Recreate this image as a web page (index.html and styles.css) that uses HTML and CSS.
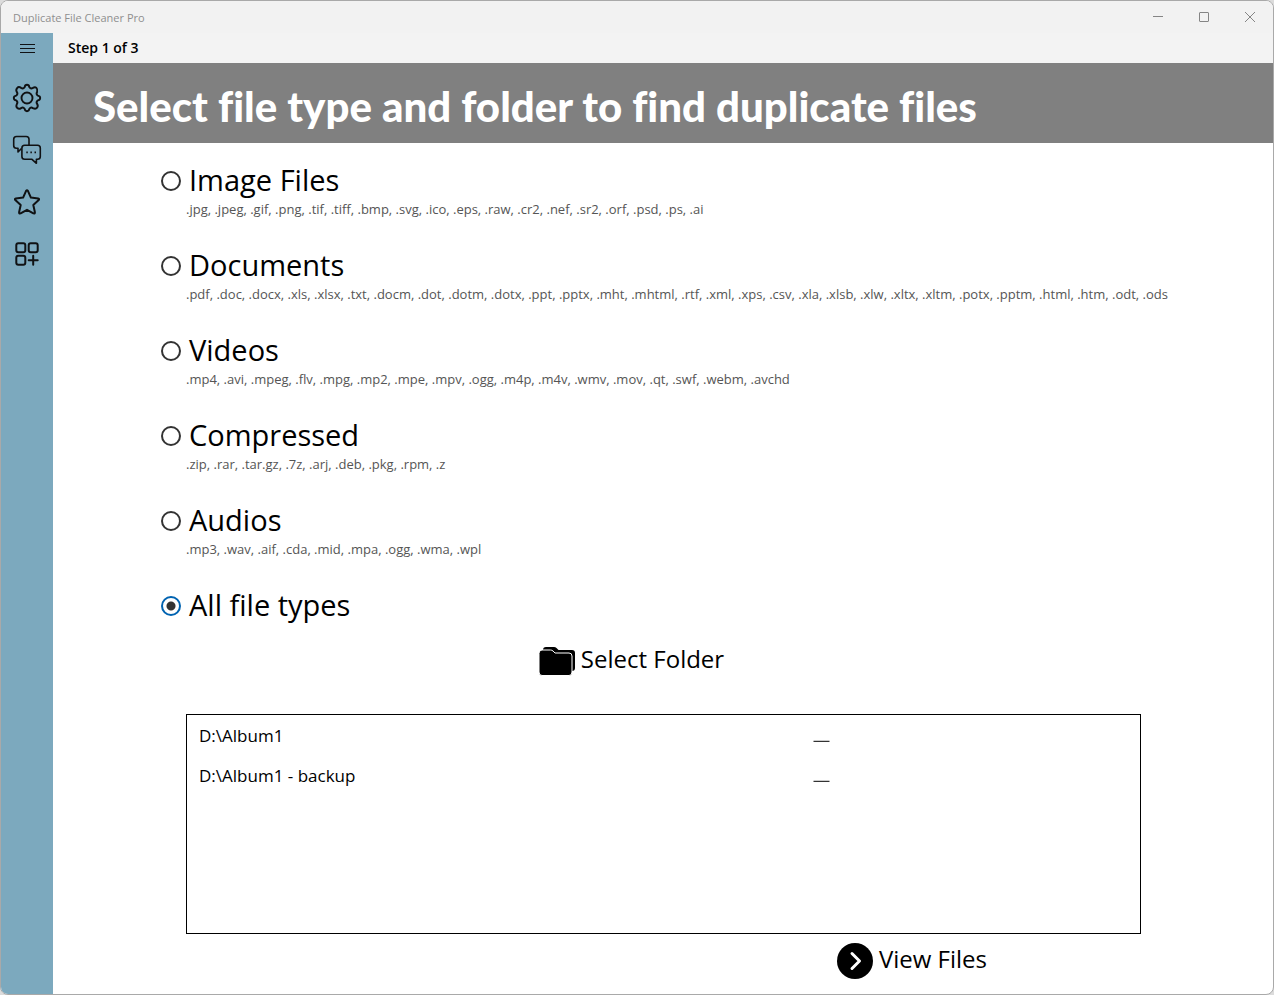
FILE: index.html
```html
<!DOCTYPE html>
<html lang="en">
<head>
    <meta charset="UTF-8">
    <meta name="viewport" content="width=device-width, initial-scale=1.0">
    <title>Duplicate File Cleaner Pro</title>
    <link rel="stylesheet" href="styles.css">
</head>
<body>
    <div class="window">
        <header class="titlebar">
            <span class="app-name">Duplicate File Cleaner Pro</span>
            <div class="window-controls">
                <button type="button" aria-label="Minimize">
                    <svg width="12" height="12" viewBox="0 0 12 12"><path d="M1 5.500H11"/></svg>
                </button>
                <button type="button" aria-label="Maximize">
                    <svg width="12" height="12" viewBox="0 0 12 12"><rect x="1.500" y="1.500" width="9" height="9" rx="0.500"/></svg>
                </button>
                <button type="button" aria-label="Close">
                    <svg width="12" height="12" viewBox="0 0 12 12"><path d="M1 1L11 11M11 1L1 11"/></svg>
                </button>
            </div>
        </header>

        <div class="layout">
            <nav class="sidebar">
                <button type="button" class="menu-btn" aria-label="Menu">
                    <svg width="16" height="12" viewBox="0 0 16 12" stroke-width="1"><path d="M1 1.500H16M1 5.500H16M1 9.500H16"/></svg>
                </button>
                <button type="button" aria-label="Settings">
                    <svg width="30" height="30" viewBox="0 0 30 30" stroke-width="1.900" stroke-linejoin="round">
                        <path d="M12.600 4.300Q13 1.800 15 1.800T17.400 4.300Q18.800 6.200 20.900 4.900Q23 3.500 24.400 4.900T25.100 9.100Q23.800 11.200 25.700 12.600Q28.200 13 28.200 15T25.700 17.400Q23.800 18.800 25.100 20.900Q26.500 23 25.100 24.700T20.900 25.100Q18.800 23.800 17.400 25.700Q17 28.200 15 28.200T12.600 25.700Q11.200 23.800 9.100 25.100Q7 26.500 5.300 25.100T4.900 20.900Q6.200 18.800 4.300 17.400Q1.800 17 1.800 15T4.300 12.600Q6.200 11.200 4.900 9.100Q3.500 7 5.100 5.100T9.100 4.900Q11.200 6.200 12.600 4.300Z"/>
                        <circle cx="15" cy="15" r="5.500"/>
                    </svg>
                </button>
                <button type="button" aria-label="Feedback">
                    <svg width="30" height="30" viewBox="0 0 30 30" stroke-width="1.600" stroke-linejoin="round">
                        <path d="M9.500 13.500L6 17V13.300H4.500Q1.700 13.300 1.700 10.500V4.300Q1.700 1.500 4.500 1.500H14.200Q17 1.500 17 4.300V10"/>
                        <path d="M12.700 10.300H25.500Q28.300 10.300 28.300 13.100V21.500Q28.300 24.300 25.500 24.300H24.400V28.300L20 24.300H12.700Q9.900 24.300 9.900 21.500V13.100Q9.900 10.300 12.700 10.300Z"/>
                        <path d="M14.300 17.300h1.500M18.400 17.300h1.500M22.500 17.300h1.500" stroke-width="1.800"/>
                    </svg>
                </button>
                <button type="button" aria-label="Rate">
                    <svg width="30" height="30" viewBox="0 0 30 30" stroke-width="2" stroke-linejoin="round">
                        <path d="M14.100 3.900Q15 2.600 15.900 3.900L18.900 10.600L26.200 11.400Q27.700 11.800 26.700 13.100L21.300 18L22.900 25.200Q23 26.900 21.400 26.400L15 22.800L8.600 26.400Q7 26.900 7.100 25.200L8.700 18L3.300 13.100Q2.300 11.800 3.800 11.400L11.100 10.600Z"/>
                    </svg>
                </button>
                <button type="button" aria-label="More apps">
                    <svg width="30" height="30" viewBox="0 0 30 30" stroke-width="2" stroke-linecap="round">
                        <rect x="4.300" y="4.300" width="9" height="9" rx="2"/>
                        <rect x="16.700" y="4.300" width="9" height="9" rx="2"/>
                        <rect x="4.300" y="16.700" width="9" height="9" rx="2"/>
                        <path d="M21.200 16.700V25.700M16.700 21.200H25.700"/>
                    </svg>
                </button>
            </nav>

            <main class="main">
                <div class="step">Step 1 of 3</div>
                <h1>Select file type and folder to find duplicate files</h1>

                <form class="content">
                    <div class="types">
                        <div class="type">
                            <input type="radio" name="type" id="images">
                            <label for="images">Image Files</label>
                            <p>.jpg, .jpeg, .gif, .png, .tif, .tiff, .bmp, .svg, .ico, .eps, .raw, .cr2, .nef, .sr2, .orf, .psd, .ps, .ai</p>
                        </div>
                        <div class="type">
                            <input type="radio" name="type" id="documents">
                            <label for="documents">Documents</label>
                            <p>.pdf, .doc, .docx, .xls, .xlsx, .txt, .docm, .dot, .dotm, .dotx, .ppt, .pptx, .mht, .mhtml, .rtf, .xml, .xps, .csv, .xla, .xlsb, .xlw, .xltx, .xltm, .potx, .pptm, .html, .htm, .odt, .ods</p>
                        </div>
                        <div class="type">
                            <input type="radio" name="type" id="videos">
                            <label for="videos">Videos</label>
                            <p>.mp4, .avi, .mpeg, .flv, .mpg, .mp2, .mpe, .mpv, .ogg, .m4p, .m4v, .wmv, .mov, .qt, .swf, .webm, .avchd</p>
                        </div>
                        <div class="type">
                            <input type="radio" name="type" id="compressed">
                            <label for="compressed">Compressed</label>
                            <p>.zip, .rar, .tar.gz, .7z, .arj, .deb, .pkg, .rpm, .z</p>
                        </div>
                        <div class="type">
                            <input type="radio" name="type" id="audios">
                            <label for="audios">Audios</label>
                            <p>.mp3, .wav, .aif, .cda, .mid, .mpa, .ogg, .wma, .wpl</p>
                        </div>
                        <div class="type">
                            <input type="radio" name="type" id="all" checked>
                            <label for="all">All file types</label>
                        </div>
                    </div>

                    <div class="select-row">
                        <button type="button" class="action">
                            <svg width="36" height="36" viewBox="0 0 36 36">
                                <path d="M4 7Q4 4 7 4H15Q16.500 4 17.500 5L19.500 7H33Q36 7 36 10V25Q36 28 33 28H7Q4 28 4 25Z"/>
                                <path d="M0 10.500Q0 7 3 7H11.500Q13 7 14 8L16 10H30Q33 10 33 13V29Q33 32.500 30 32.500H3Q0 32.500 0 29Z" stroke="#fff" stroke-width="1"/>
                            </svg>
                            <span>Select Folder</span>
                        </button>
                    </div>

                    <ul class="folders">
                        <li>
                            <span>D:\Album1</span>
                            <button type="button" aria-label="Remove D:\Album1"><svg width="17" height="16" viewBox="0 0 17 16"><path d="M0.500 14.300H16.500"/></svg></button>
                        </li>
                        <li>
                            <span>D:\Album1 - backup</span>
                            <button type="button" aria-label="Remove D:\Album1 - backup"><svg width="17" height="16" viewBox="0 0 17 16"><path d="M0.500 14.300H16.500"/></svg></button>
                        </li>
                    </ul>

                    <div class="view-row">
                        <button type="submit" class="action">
                            <svg width="36" height="36" viewBox="0 0 36 36">
                                <circle cx="18" cy="18" r="18"/>
                                <path d="M15 10.500L22.500 18L15 25.500" fill="none" stroke="#fff" stroke-width="3" stroke-linecap="round" stroke-linejoin="round"/>
                            </svg>
                            <span>View Files</span>
                        </button>
                    </div>
                </form>
            </main>
        </div>
    </div>
</body>
</html>
```
FILE: styles.css
```css
* {
    box-sizing: border-box;
}
body {
    margin: 0;
    background-color: #dcdcdc;
    font-family: "Open Sans", "Noto Sans", sans-serif;
    color: #000;
}
button {
    padding: 0;
    border: none;
    background: none;
    font-family: inherit;
    color: inherit;
    cursor: pointer;
}
svg {
    display: block;
}
.window {
    display: flex;
    flex-direction: column;
    min-height: 100vh;
    border: 1px solid #a9a9a9;
    border-radius: 8px;
    overflow: hidden;
    background-color: #fff;
}
.titlebar {
    display: flex;
    align-items: center;
    justify-content: space-between;
    height: 32px;
    padding-left: 12px;
    background-color: #f2f2f2;
}
.app-name {
    font-size: 11px;
    color: #8f8f8f;
}
.window-controls {
    display: flex;
}
.window-controls button {
    display: flex;
    align-items: center;
    justify-content: center;
    width: 46px;
    height: 32px;
}
.window-controls svg {
    fill: none;
    stroke: #858585;
}
.layout {
    display: flex;
    flex: 1;
}
.sidebar {
    flex: 0 0 52px;
    background-color: #7ca9be;
}
.sidebar button {
    display: flex;
    align-items: center;
    justify-content: center;
    width: 52px;
    height: 52px;
}
.sidebar .menu-btn {
    height: 32px;
    margin-bottom: 7px;
}
.sidebar svg {
    fill: none;
    stroke: #101214;
}
.main {
    flex: 1;
    min-width: 0;
}
.step {
    height: 30px;
    padding-left: 15px;
    background-color: #f3f3f3;
    font-size: 14px;
    font-weight: 600;
    line-height: 30px;
}
h1 {
    margin: 0;
    padding: 18px 40px 12px;
    background-color: #808080;
    color: #fff;
    font-family: Lato, sans-serif;
    font-size: 42px;
    font-weight: 900;
    font-variant-ligatures: none;
    line-height: 50px;
}
.content {
    padding: 18px 132px 15px 133px;
}
.types {
    margin: 0 -132px 0 -25px;
}
.type {
    display: grid;
    grid-template-columns: 20px 1fr;
    column-gap: 8px;
    align-items: center;
    margin-bottom: 29px;
}
.type:last-child {
    margin-bottom: 0;
}
.type input {
    appearance: none;
    width: 20px;
    height: 20px;
    margin: 0;
    border: 2px solid #333;
    border-radius: 50%;
}
.type input:checked {
    border-color: #0063b1;
    background: radial-gradient(circle, #333 4px, transparent 5px);
}
.type label {
    padding-bottom: 2px;
    font-size: 29px;
    line-height: 38px;
}
.type p {
    grid-column: 1 / -1;
    margin: 0 0 0 25px;
    font-size: 13px;
    line-height: 16px;
    color: #555;
}
.action {
    display: flex;
    align-items: center;
    gap: 6px;
    font-size: 24px;
    line-height: 32px;
}
.action span {
    padding-bottom: 4px;
}
.select-row {
    display: flex;
    justify-content: center;
    margin: 17px 64px 35px 0;
}
.folders {
    min-height: 220px;
    margin: 0;
    padding: 0 20px 0 12px;
    border: 1px solid #000;
    list-style: none;
}
.folders li {
    display: grid;
    grid-template-columns: 2fr 1fr;
    align-items: center;
    height: 40px;
    font-size: 17px;
}
.folders button {
    justify-self: start;
}
.folders svg {
    stroke: #000;
    stroke-width: 1px;
}
.view-row {
    display: flex;
    justify-content: flex-end;
    margin: 9px 154px 0 0;
}
```
